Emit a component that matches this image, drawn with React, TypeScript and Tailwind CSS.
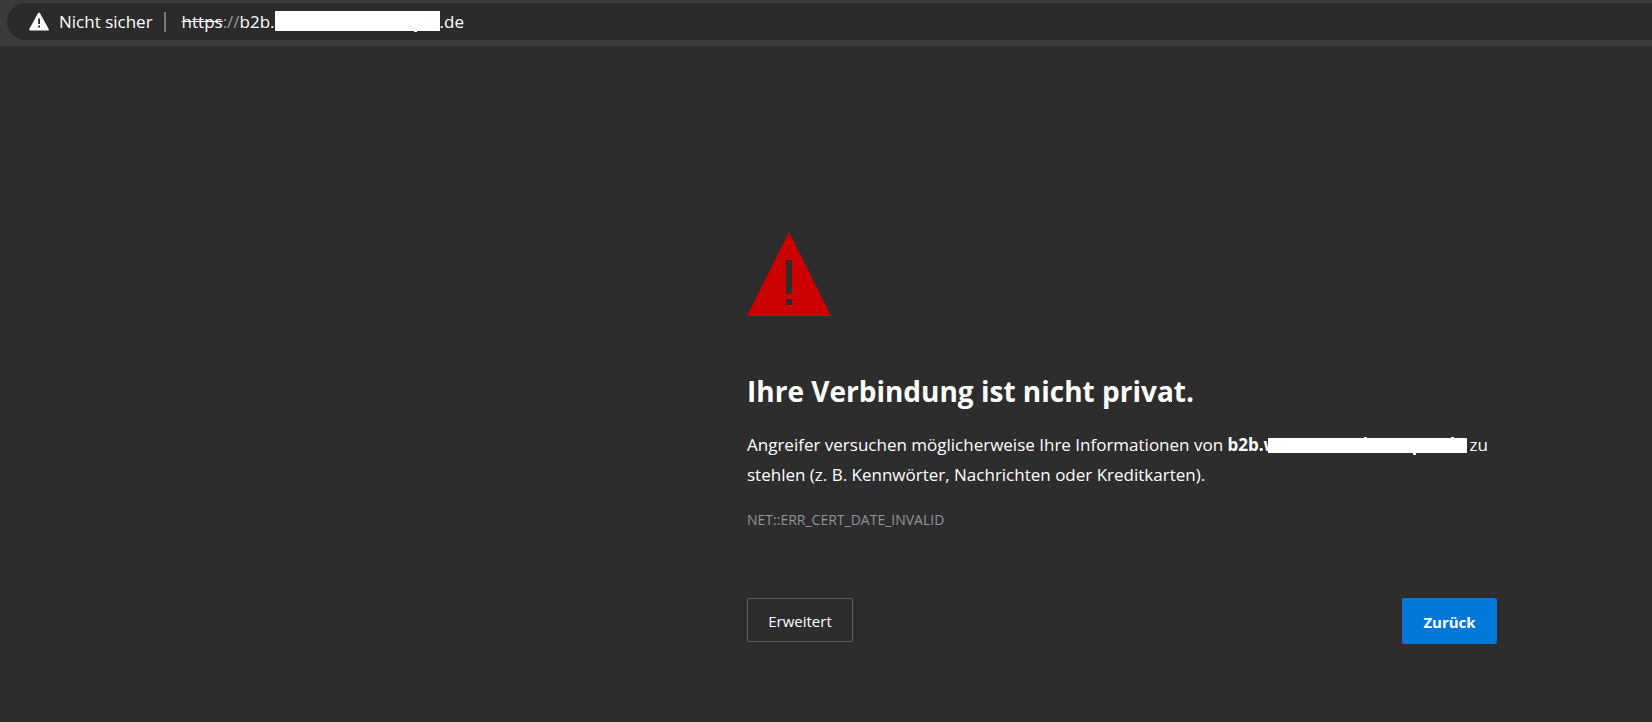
function WarningBadge() {
  return (
    <svg className="h-5 w-5 shrink-0" viewBox="0 0 20 20" aria-hidden="true">
      <path d="M10 1.6 18.8 17.6H1.2Z" fill="#fff" stroke="#fff" strokeWidth="2" strokeLinejoin="round" />
      <path d="M9.2 6.6h1.8v5.5H9.2ZM9.2 13.6h1.8v2H9.2Z" fill="#2b2b2b" />
    </svg>
  );
}

function WarningTriangle() {
  return (
    <svg className="h-[84px] w-[84px]" viewBox="0 0 84 84" role="img" aria-label="Warnung">
      <path d="M42 0 84 84H0Z" fill="#cc0000" />
      <path d="M39 28h6v34h-6ZM39 67h6v6h-6Z" fill="#2d2d2d" />
    </svg>
  );
}

function AddressBar() {
  return (
    <header className="bg-[#3b3b3b] pt-[3px] pb-[6px] pl-[7px]">
      <div className="flex h-[37px] items-center rounded-l-full bg-[#2b2b2b] pl-[22px] text-[17px] leading-6 text-white">
        <WarningBadge />
        <span className="ml-[10px]">Nicht sicher</span>
        <span className="mr-4 ml-[11px] h-5 w-[2px] bg-[#7a7a7a]" />
        <span className="line-through">https</span>
        <span className="text-[#9a9a9a]">://</span>
        <span>b2b.</span>
        <span className="relative mb-px h-5 w-[165px] bg-white">
          <span className="absolute top-full left-[139px] h-px w-[3px] bg-white" />
        </span>
        <span>.de</span>
      </div>
    </header>
  );
}

// bar over the host name, with the tips of the covered letters sticking out
function HiddenHost() {
  return (
    <>
      <strong className="font-bold">b2b.w</strong>
      <span className="relative -mr-[2px] -ml-[10px] inline-block h-[15px] w-[199px] bg-white align-[-2px]">
        <span className="absolute bottom-full left-[96px] h-px w-[3px] bg-white" />
        <span className="absolute bottom-full left-[183px] h-px w-[3px] bg-white" />
        <span className="absolute top-full left-[145px] h-[2px] w-[3px] bg-white" />
      </span>
    </>
  );
}

export default function App() {
  return (
    <div className="min-h-screen bg-[#2d2d2d] font-['Open_Sans','Noto_Sans',sans-serif] text-white">
      <AddressBar />
      <main className="mr-[155px] ml-auto max-w-[750px] pt-[186px] pb-16">
        <WarningTriangle />
        <h1 className="mt-[55px] text-[28px] leading-10 font-bold">Ihre Verbindung ist nicht privat.</h1>
        <p className="mt-[19px] text-[17px] leading-[30px]">
          Angreifer versuchen möglicherweise Ihre Informationen von <HiddenHost /> zu stehlen (z. B. Kennwörter,
          Nachrichten oder Kreditkarten).
        </p>
        <p className="mt-[15px] text-[14px] leading-[30px] text-[#8f9496]">NET::ERR_CERT_DATE_INVALID</p>
        <div className="mt-[63px] flex items-start justify-between">
          <button type="button" className="h-11 w-[106px] rounded-xs border border-[#5f5f5f] pt-[2px] text-[15px]">
            Erweitert
          </button>
          <button type="button" className="h-[46px] w-[95px] rounded-xs bg-[#0078d7] pt-[2px] text-[15px] font-bold">
            Zurück
          </button>
        </div>
      </main>
    </div>
  );
}
